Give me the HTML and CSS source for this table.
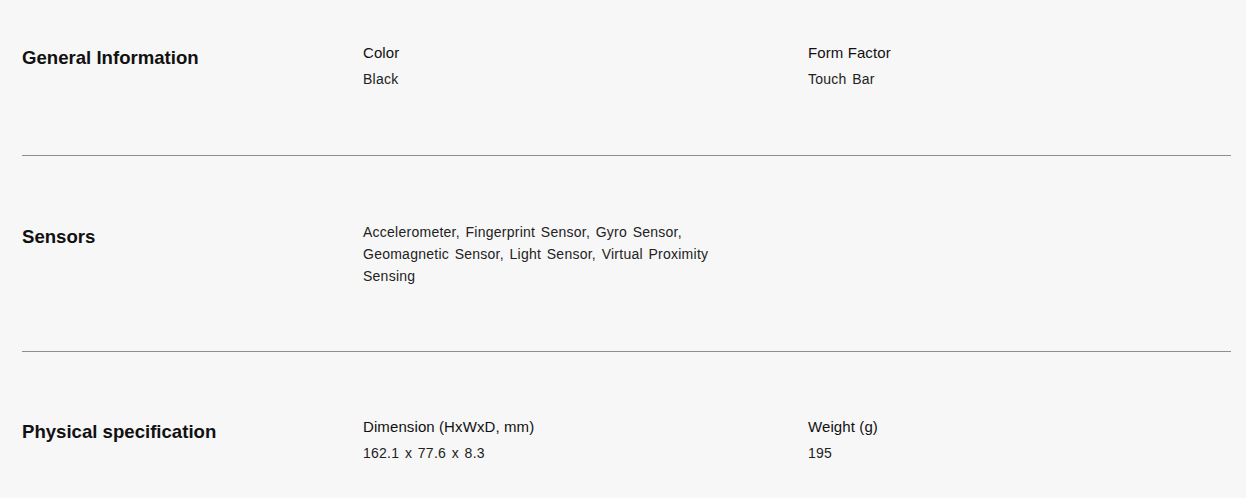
FILE: index.html
```html
<!DOCTYPE html>
<html>
<head>
<meta charset="utf-8">
<link rel="stylesheet" href="styles.css">
</head>
<body>
<div class="specs">
  <section class="spec first">
    <h2 class="title">General Information</h2>
    <div class="item">
      <div class="label">Color</div>
      <div class="value">Black</div>
    </div>
    <div class="item">
      <div class="label">Form Factor</div>
      <div class="value">Touch Bar</div>
    </div>
  </section>
  <section class="spec">
    <h2 class="title">Sensors</h2>
    <div class="item">
      <div class="value wrap">Accelerometer, Fingerprint Sensor, Gyro Sensor, Geomagnetic Sensor, Light Sensor, Virtual Proximity Sensing</div>
    </div>
  </section>
  <section class="spec last">
    <h2 class="title">Physical specification</h2>
    <div class="item">
      <div class="label">Dimension (HxWxD, mm)</div>
      <div class="value">162.1 x 77.6 x 8.3</div>
    </div>
    <div class="item">
      <div class="label">Weight (g)</div>
      <div class="value">195</div>
    </div>
  </section>
</div>
</body>
</html>
```
FILE: styles.css
```css
html, body {
  margin: 0;
  padding: 0;
  background: #f7f7f7;
}
body {
  font-family: "Liberation Sans", Arial, sans-serif;
  color: #000;
  height: 498px;
  overflow: hidden;
}
.specs {
  padding: 0 15px 0 22px;
}
.spec {
  display: grid;
  grid-template-columns: 341px 445px 1fr;
  align-items: start;
  padding: 65px 0 64px;
  border-bottom: 1px solid #8f8f8f;
}
.spec.first {
  padding-top: 42px;
  padding-bottom: 65px;
}
.spec.last {
  border-bottom: none;
  padding-top: 64px;
}
.title {
  margin: 0;
  font-size: 18.6px;
  line-height: 32px;
  font-weight: bold;
  color: #111;
}
.label {
  font-size: 15px;
  line-height: 22px;
  color: #111;
  margin-bottom: 4px;
  letter-spacing: 0.1px;
}
.value {
  font-size: 14px;
  line-height: 22px;
  color: #222;
  letter-spacing: 0.25px;
  word-spacing: 1.5px;
}
.value.wrap {
  width: 360px;
}
```
